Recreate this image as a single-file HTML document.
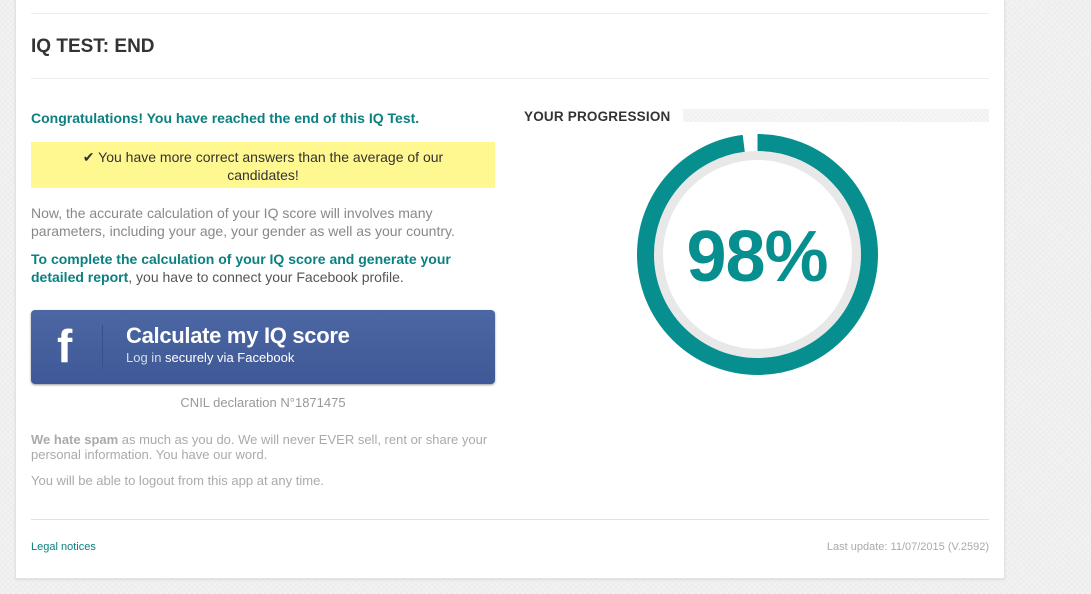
<!DOCTYPE html>
<html><head><style>
body{margin:0;width:1091px;height:594px;background:#f2f2f2;font-family:"Liberation Sans",sans-serif;position:relative;overflow:hidden;
background-image:repeating-linear-gradient(45deg,#ececec 0 1px,transparent 1px 4px),repeating-linear-gradient(-45deg,#ececec 0 1px,transparent 1px 4px);}
.panel{position:absolute;left:15px;top:-2px;width:988px;height:579px;background:#fff;border:1px solid #e2e2e2;box-shadow:0 1px 2px #ddd;}
.a{position:absolute;}
.hr{position:absolute;left:31px;width:958px;height:1px;background:#ececec;}
p{margin:0}
</style></head><body>
<div class="panel"></div>
<div class="hr" style="top:13px"></div>
<div class="a" style="left:31px;top:36px;font-size:19px;font-weight:bold;color:#333;">IQ TEST: END</div>
<div class="hr" style="top:78px"></div>
<div class="a" style="left:31px;top:110px;font-size:14px;font-weight:bold;color:#0b8080;">Congratulations! You have reached the end of this IQ Test.</div>
<div class="a" style="left:31px;top:142px;width:464px;height:46px;background:#fff78f;text-align:center;font-size:14px;line-height:18px;color:#333;padding-top:6px;box-sizing:border-box;">✔ You have more correct answers than the average of our<br>candidates!</div>
<div class="a" style="left:31px;top:204px;width:470px;font-size:14px;line-height:18px;color:#888;">Now, the accurate calculation of your IQ score will involves many parameters, including your age, your gender as well as your country.</div>
<div class="a" style="left:31px;top:250px;width:470px;font-size:14px;line-height:18px;color:#555;"><b style="color:#0b8080">To complete the calculation of your IQ score and generate your detailed report</b>, you have to connect your Facebook profile.</div>
<div class="a" style="left:31px;top:310px;width:464px;height:74px;border-radius:4px;background:linear-gradient(#4c67a3,#3f5897);box-shadow:0 1px 2px #999;">
 <div class="a" style="left:26px;top:13px;font-size:46px;font-weight:bold;color:#fff;line-height:46px;">f</div>
 <div class="a" style="left:71px;top:15px;width:1px;height:44px;background:#36508a;"></div>
 <div class="a" style="left:95px;top:13px;font-size:22px;font-weight:bold;color:#fff;letter-spacing:-0.3px;">Calculate my IQ score</div>
 <div class="a" style="left:95px;top:40px;font-size:13px;color:#fff;"><span style="color:#d5dcea">Log in</span> securely via Facebook</div>
</div>
<div class="a" style="left:31px;top:395px;width:464px;text-align:center;font-size:13px;color:#999;">CNIL declaration N°1871475</div>
<div class="a" style="left:31px;top:432px;width:475px;font-size:13px;line-height:15px;color:#aaa;"><b>We hate spam</b> as much as you do. We will never EVER sell, rent or share your personal information. You have our word.</div>
<div class="a" style="left:31px;top:473px;font-size:13px;color:#aaa;">You will be able to logout from this app at any time.</div>
<div class="hr" style="top:519px;background:#e2e2e2"></div>
<div class="a" style="left:31px;top:541px;font-size:11px;color:#0b8080;">Legal notices</div>
<div class="a" style="right:102px;top:541px;font-size:11px;color:#aaa;">Last update: 11/07/2015 (V.2592)</div>
<div class="a" style="left:524px;top:109px;font-size:13.5px;font-weight:bold;color:#333;letter-spacing:0.2px;">YOUR PROGRESSION</div>
<div class="a" style="left:683px;top:109px;width:306px;height:13px;background:repeating-linear-gradient(45deg,#eee 0 1px,#f6f6f6 1px 3px);"></div>
<svg class="a" style="left:637px;top:134px" width="241" height="241" viewBox="0 0 241 241">
 <circle cx="120.5" cy="120.5" r="99" fill="none" stroke="#e8e8e8" stroke-width="9"/>
 <circle cx="120.5" cy="120.5" r="112" fill="none" stroke="#078f8f" stroke-width="17" stroke-dasharray="689.6 703.7" transform="rotate(-90 120.5 120.5)"/>
 <text x="120" y="147" text-anchor="middle" font-family="Liberation Sans" font-weight="bold" font-size="72" fill="#078f8f" letter-spacing="-1">98%</text>
</svg>
</body></html>
